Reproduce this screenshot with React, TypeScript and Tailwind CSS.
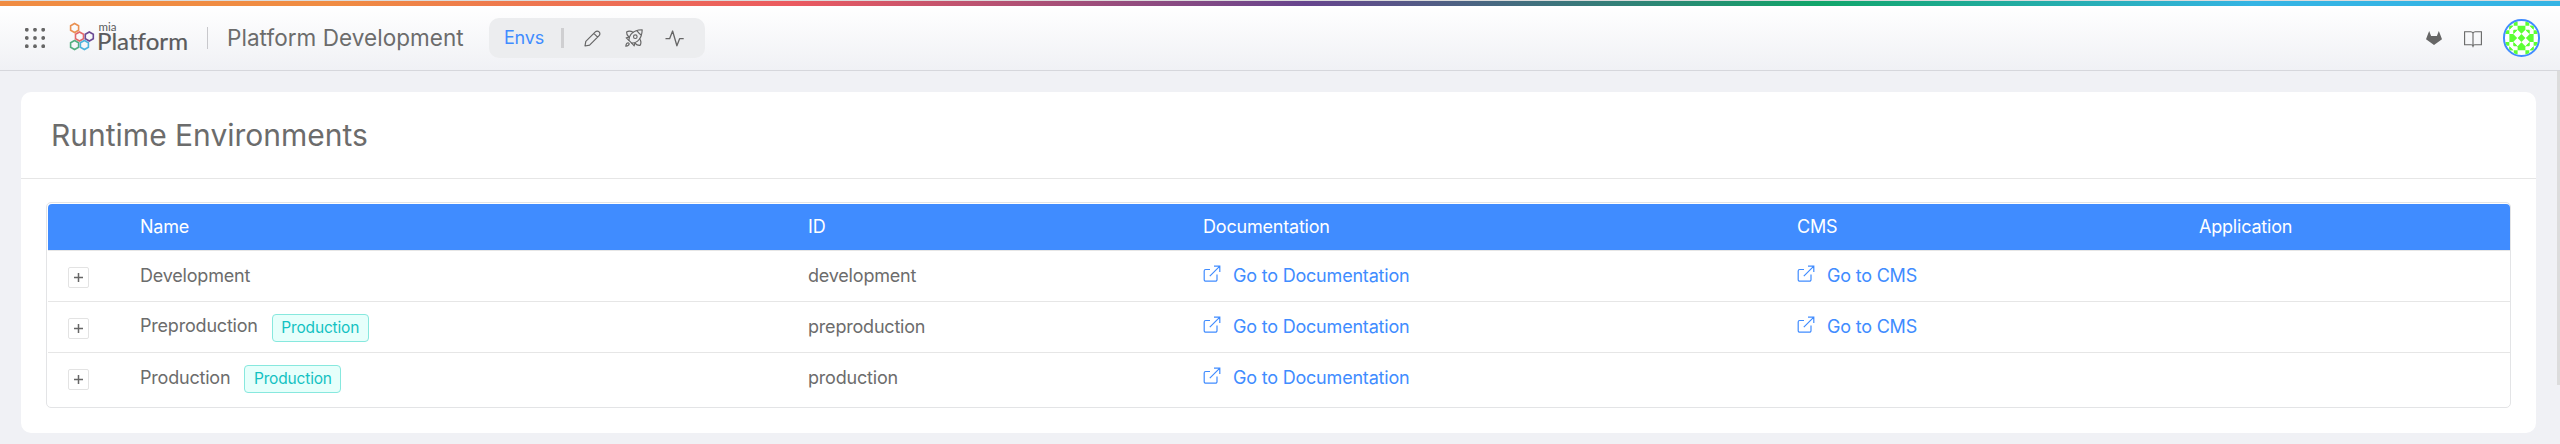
import React from "react";

type Env = { name: string; id: string; tag: boolean; cms: boolean };

const rows: Env[] = [
  { name: "Development", id: "development", tag: false, cms: true },
  { name: "Preproduction", id: "preproduction", tag: true, cms: true },
  { name: "Production", id: "production", tag: true, cms: false },
];

const COLUMNS = "grid grid-cols-[92px_668px_395px_594px_402px_311px]";
const HEX = "M4.6 0.7 L8.6 2.95 V7.45 L4.6 9.7 L0.6 7.45 V2.95 Z";

function Logo() {
  return (
    <svg width="118" height="30" viewBox="0 0 118 30" className="block overflow-visible [font-variant-ligatures:none]">
      <g fill="none" strokeWidth="1.6">
        <path d={HEX} stroke="#ea9152" transform="translate(0 -0.2)" />
        <path d={HEX} stroke="#e4686b" transform="translate(4.9 8.3)" />
        <path d={HEX} stroke="#6b4a94" transform="translate(14.7 8.3)" />
        <path d={HEX} stroke="#52ae80" transform="translate(0 16.8)" />
        <path d={HEX} stroke="#4db3dc" transform="translate(9.8 16.8)" />
      </g>
      <text x="28.4" y="8" fontFamily="Lato, sans-serif" fontSize="11" fontWeight="400" textLength="18" lengthAdjust="spacingAndGlyphs" fill="#5a5b5d">mia</text>
      <text x="27" y="27.2" fontFamily="Lato, sans-serif" fontSize="22.7" fontWeight="400" textLength="91" lengthAdjust="spacingAndGlyphs" fill="#5a5b5d" stroke="#5a5b5d" strokeWidth="0.2">Platform</text>
    </svg>
  );
}

function Pencil() {
  return (
    <svg width="17" height="17" viewBox="0 0 17 17" fill="none" stroke="#666" strokeWidth="1.2" strokeLinejoin="round">
      <path d="M1 16l.8-4.6L11.3 1.9a2.6 2.6 0 0 1 3.8 3.8L5.6 15.1zM9.800 3.400l3.800 3.800" />
    </svg>
  );
}

function Rocket() {
  return (
    <svg width="18" height="18" viewBox="0 0 18 18" fill="none" stroke="#666" strokeWidth="1.15" strokeLinejoin="round" strokeLinecap="round">
      <path d="M17.2.8c-4.600.1-8.800 1.500-11.300 4.600C4.300 7.400 3.800 9.300 3.900 11.300L6.700 14.100c2 .1 3.900-.4 5.900-2C15.700 9.600 17.100 5.400 17.200.8z" />
      <circle cx="10.300" cy="7.700" r="1.800" />
      <path d="M12 1.900c1.200 1.600 2.600 3 4.200 4.100M8.200 3.300C6 2 3.400 1.700 1.600 3c-.2 1.900.6 3.600 2.400 5.200M14.700 9.800c1.300 2.200 1.600 4.800.3 6.600-1.900.2-3.600-.6-5.200-2.400M1.200 8.800l2.800-.6M9.200 16.800l.6-2.800M3.900 11.300l-2.700-2.500M6.700 14.100l2.500 2.700M3.300 13.800c-1.500.1-2.300 1.300-2.500 3.400 2.100-.2 3.300-1 3.400-2.500z" />
    </svg>
  );
}

function Pulse() {
  return (
    <svg width="19" height="17" viewBox="0 0 19 17" fill="none" stroke="#666" strokeWidth="1.300" strokeLinejoin="round" strokeLinecap="round">
      <path d="M1 8.700h3.600L7.600 1l4.300 14.800 2.700-7.100h3.600" />
    </svg>
  );
}

function Gitlab() {
  return (
    <svg width="16" height="14" viewBox="0 0 16 14" fill="#666">
      <path d="M3.200 0L5.100 5h5.800L12.800 0l1.500 3.800L16 8.200 8 14 0 8.200 1.700 3.800z" />
    </svg>
  );
}

function Book() {
  return (
    <svg width="18" height="17" viewBox="0 0 18 17" fill="none" stroke="#666" strokeWidth="1.1">
      <path d="M9 2.300C8.500 1.200 7.800.8 6.800.8H.6v13h6.600c1 0 1.600.5 1.800 1.400.2-.9.800-1.400 1.800-1.400h6.600V.8h-6.200c-1 0-1.700.4-2.200 1.500zM9 2.300v14" />
    </svg>
  );
}

function Avatar() {
  return (
    <div className="h-[38px] w-[37px] overflow-hidden rounded-full border-2 border-[#408cff] bg-white">
      <svg viewBox="-17 -17 34 34" className="size-full" fill="#5cff33">
        {[0, 90, 180, 270].map((a) => (
          <g key={a} transform={`rotate(${a})`}>
            <path d="M-4-12.500L4-12.500 4-8.500 0-4.500-4-8.500z" />
            <path d="M-8-17h4v4.500h-4zM4-17h4v4.500H4zM-12.500-12.500h4l-4 4zM8.500-12.500h4v4zM4-8.500h4l0 4z M-4-8.500h-4v4z" />
          </g>
        ))}
        <path d="M0-4L4 0 0 4-4 0z" />
      </svg>
    </div>
  );
}

function LinkOut({ label }: { label: string }) {
  return (
    <a className="flex items-center text-[#408cff]">
      <svg width="18" height="18" viewBox="0 0 18 18" fill="none" stroke="currentColor" strokeWidth="1.2" className="mr-[12px] -mt-[5px]">
        <path d="M7 4.500H2.700A1.500 1.500 0 0 0 1.200 6v8.700a1.500 1.500 0 0 0 1.500 1.500H12.500A1.500 1.500 0 0 0 14 14.700V9.500M11 1.200H16.800V7M16.800 1.200L6.800 11.200" />
      </svg>
      {label}
    </a>
  );
}

function Row({ env, last }: { env: Env; last: boolean }) {
  return (
    <div className={`${COLUMNS} ${last ? "h-[50px]" : "h-[51px] border-b border-[#e6e6e6]"} items-center`}>
      <div className="pl-5">
        <button className="mt-[3px] flex size-[21px] items-center justify-center rounded-[2px] border border-[#e3e3e3] bg-white">
          <svg width="9" height="9" viewBox="0 0 9 9" stroke="#666" strokeWidth="1.500"><path d="M4.500 0v9M0 4.500h9" /></svg>
        </button>
      </div>
      <div className="flex items-center">
        <span className={env.tag && !last ? "-mt-[2px]" : ""}>{env.name}</span>
        {env.tag && (
          <span className="ml-[14px] mt-px flex h-[28px] w-[97px] items-center justify-center rounded-[4px] border border-[#87e8de] bg-[#e6fffb] text-[15.5px] tracking-[-0.17px] text-[#13c2c2]">
            Production
          </span>
        )}
      </div>
      <div>{env.id}</div>
      <div><LinkOut label="Go to Documentation" /></div>
      <div>{env.cms && <LinkOut label="Go to CMS" />}</div>
      <div />
    </div>
  );
}

export default function App() {
  return (
    <div className="flex h-[444px] w-[2560px] flex-col overflow-hidden bg-[#f0f1f5] font-[Inter,sans-serif] text-[18px] font-normal leading-6 tracking-[-0.2px] text-[#6c6c6c]">
      <div className="h-px shrink-0 bg-[#dcdcdc]" />
      <div className="h-[5px] shrink-0 bg-[linear-gradient(90deg,#f08c42_0%,#f08c42_13%,#eb5a60_31%,#67458e_51%,#12a66a_71%,#35b4e4_88%,#35b4e4_100%)]" />
      <header className="flex h-[65px] shrink-0 items-center border-b border-[#d6d7dc] bg-gradient-to-b from-white to-[#f0f1f5]">
        <svg width="20" height="20" viewBox="0 0 20 20" className="ml-[25px]" fill="#666">
          {[1.8, 10, 18.2].map((y) => [1.8, 10, 18.2].map((x) => <circle key={`${x}-${y}`} cx={x} cy={y} r="1.9" />))}
        </svg>
        <div className="ml-[25px] tracking-normal"><Logo /></div>
        <div className="ml-[19px] h-[22px] w-px bg-[#c8c8cc]" />
        <h1 className="ml-[19px] w-[262px] text-[22.5px] tracking-[0.05px]">Platform Development</h1>
        <nav className="flex h-10 w-[216px] items-center rounded-[10px] bg-[#ecedef] pl-[15px]">
          <span className="w-[57px] text-[#408cff]">Envs</span>
          <span className="mr-[20px] h-5 w-[3px] bg-[#cfcfd1]" />
          <Pencil />
          <span className="ml-[24px]"><Rocket /></span>
          <span className="ml-[22px]"><Pulse /></span>
        </nav>
        <div className="ml-auto mr-[20px] flex items-center">
          <span className="mr-[22px]"><Gitlab /></span>
          <span className="mr-[21px] mt-[2px]"><Book /></span>
          <Avatar />
        </div>
      </header>
      <main className="flex justify-between">
        <section className="ml-[21px] mt-[21px] h-[341px] w-[2515px] rounded-[10px] bg-white">
          <h2 className="flex h-[87px] items-center border-b border-[#e6e6e6] pb-px pl-[30px] text-[30px] tracking-[0px]">Runtime Environments</h2>
          <div className="ml-[25px] mt-[23px] h-[206px] w-[2465px] rounded-[5px] border border-[#e3e4e6] pl-px pt-px">
            <div className={`${COLUMNS} h-[46px] items-center rounded-t-[4px] bg-[#408cff] text-white`}>
              <span />
              <span>Name</span>
              <span>ID</span>
              <span>Documentation</span>
              <span>CMS</span>
              <span>Application</span>
            </div>
            <div className="border-t border-[#e6e6e6]">
              {rows.map((env, i) => <Row key={env.id} env={env} last={i === rows.length - 1} />)}
            </div>
          </div>
        </section>
        <div className="h-[314px] w-[3px] bg-[#dcdcdc]" />
      </main>
    </div>
  );
}
